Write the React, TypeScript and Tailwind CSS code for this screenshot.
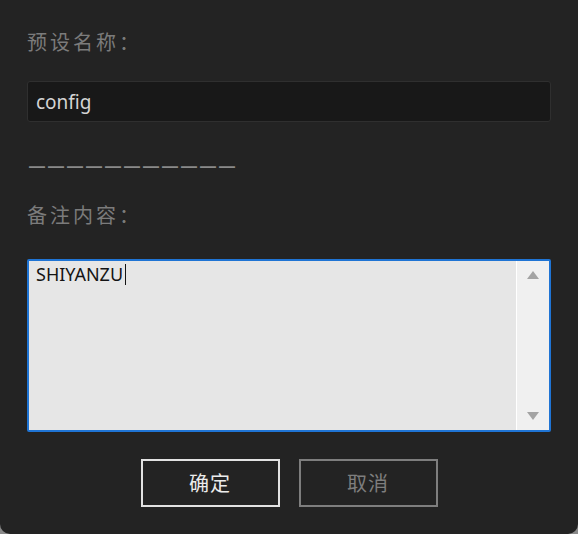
import { useState } from "react";

const App = () => {
  const [name, setName] = useState<string>("config");
  const [note, setNote] = useState<string>("SHIYANZU");

  return (
    <div className="w-[578px] h-[534px] bg-[#8a8a8a] font-['Noto_Sans','Noto_Sans_CJK_SC',sans-serif]">
      <div className="w-full h-full bg-[#232323] rounded-b-[10px] px-[27px] pt-[29px] flex flex-col">
        <label
          htmlFor="presetName"
          className="text-[#7b7b7b] text-[20px] leading-[26px] tracking-[3px] font-['Noto_Sans_CJK_SC',sans-serif]"
        >
          预设名称：
        </label>
        <input
          id="presetName"
          type="text"
          value={name}
          onChange={(e) => setName(e.target.value)}
          className="mt-[26px] h-[41px] w-[524px] bg-[#181818] border border-[#2f2f2f] rounded-[3px] px-[8px] outline-none text-[19px] text-[#d4d4d4]"
        />
        <div className="mt-[32px] text-[#8a8a8a] text-[16px] font-bold leading-[26px] tracking-[3px] font-['Liberation_Sans',sans-serif] pl-[2px]">
          ———————————
        </div>
        <label
          htmlFor="note"
          className="mt-[22px] text-[#7b7b7b] text-[20px] leading-[26px] tracking-[3px] font-['Noto_Sans_CJK_SC',sans-serif]"
        >
          备注内容：
        </label>
        {/* 备注输入框 + 滚动条 */}
        <div className="mt-[31px] h-[173px] w-[524px] border-2 border-[#1f74d4] rounded-[2px] bg-[#e6e6e6] flex">
          <div className="flex-1 h-full relative">
            <textarea
              id="note"
              value={note}
              onChange={(e) => setNote(e.target.value)}
              className="w-full h-full bg-transparent resize-none outline-none px-[7px] pt-[1px] text-[18px] leading-[24px] text-[#141414]"
            />
            <span className="absolute left-[96px] top-[3px] w-[1px] h-[21px] bg-[#141414] pointer-events-none" />
          </div>
          <div className="w-[33px] h-full bg-[#f0f0f0] border-l border-white flex flex-col items-center justify-between py-[10px]">
            <svg width="12" height="8" viewBox="0 0 12 8">
              <path d="M6 0 L12 8 L0 8 Z" fill="#a3a3a3" />
            </svg>
            <svg width="12" height="8" viewBox="0 0 12 8">
              <path d="M0 0 L12 0 L6 8 Z" fill="#a3a3a3" />
            </svg>
          </div>
        </div>
        <div className="mt-[27px] flex justify-center gap-[19px]">
          <button className="w-[139px] h-[48px] border-2 border-[#e2e2e2] text-[#ececec] text-[20px] tracking-[1px] font-['Noto_Sans_CJK_SC',sans-serif]">
            确定
          </button>
          <button className="w-[139px] h-[48px] border-2 border-[#7e7e7e] text-[#7e7e7e] text-[20px] tracking-[1px] font-['Noto_Sans_CJK_SC',sans-serif]">
            取消
          </button>
        </div>
      </div>
    </div>
  );
};

export default App;
